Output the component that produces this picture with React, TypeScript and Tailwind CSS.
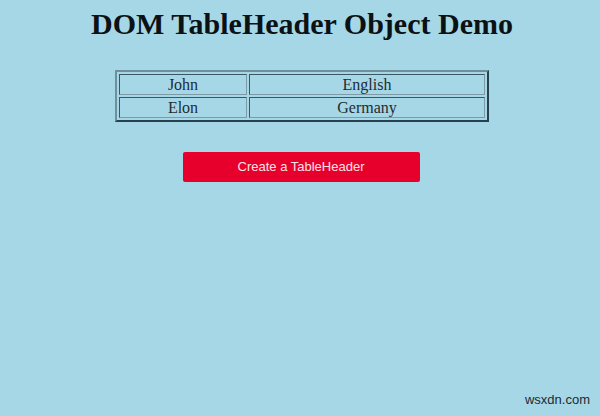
import React from 'react';

const rows = [
  ['John', 'English'],
  ['Elon', 'Germany'],
];

const App: React.FC = () => {
  return (
    <div className="w-[600px] h-[416px] bg-[#a6d7e7] relative overflow-hidden flex flex-col items-center pl-[4px]">
      <h1 className="mt-[7px] text-[30px] leading-[34px] font-bold text-[#0b1114] font-['Liberation_Serif',serif]">
        DOM TableHeader Object Demo
      </h1>

      {/* Table */}
      <table className="mt-[29px] border-separate border-spacing-[2px] border-2 border-t-[#6f8f9b] border-l-[#6f8f9b] border-b-[#27424e] border-r-[#27424e] font-['Liberation_Serif',serif] text-[16px] text-[#1d2c33]">
        <tbody>
          {rows.map(([name, lang]) => (
            <tr key={name}>
              <td className="w-[128px] h-[21px] p-0 leading-[19px] text-center border border-t-[#3b5763] border-l-[#3b5763] border-b-[#7c9ba6] border-r-[#7c9ba6]">
                {name}
              </td>
              <td className="w-[236px] h-[21px] p-0 leading-[19px] text-center border border-t-[#3b5763] border-l-[#3b5763] border-b-[#7c9ba6] border-r-[#7c9ba6]">
                {lang}
              </td>
            </tr>
          ))}
        </tbody>
      </table>

      <button className="mt-[30px] mr-[2px] w-[237px] h-[30px] rounded-[2px] bg-[#e8002c] text-[#fbe3ea] text-[13px] font-['Liberation_Sans',sans-serif]">
        Create a TableHeader
      </button>

      {/* watermark */}
      <span className="absolute right-[10px] bottom-[7px] text-[13px] text-[#1c2a30] font-['Liberation_Sans',sans-serif]">
        wsxdn.com
      </span>
    </div>
  );
};

export default App;
